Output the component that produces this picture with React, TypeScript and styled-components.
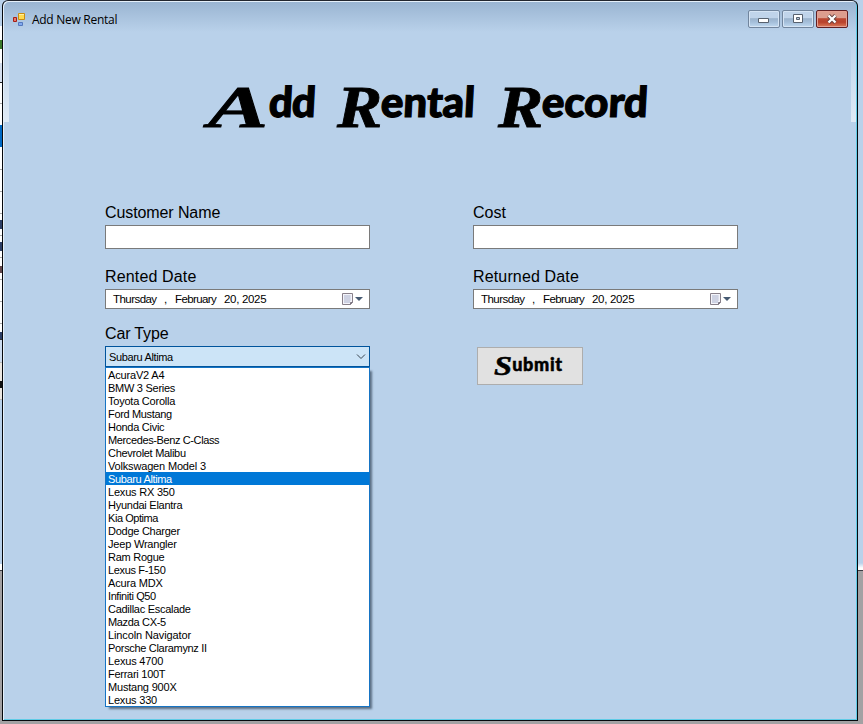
import React from "react";
import styled, { createGlobalStyle } from "styled-components";

const Global = createGlobalStyle`
  *{box-sizing:border-box}
  html,body{margin:0;padding:0;overflow:hidden}
  body{font-family:"Liberation Sans",Arial,sans-serif;color:#000}
`;

const Desktop = styled.div`
  width: 863px;
  height: 724px;
  display: grid;
  grid-template-columns: 2px 856px 5px;
  background: linear-gradient(#b9d1ea 0 563px, #fff 568px 570px, #3c3c44 570px 571px, #a3a1a3 571px);
`;

const LeftSliver = styled.div`
  height: 571px;
  background: linear-gradient(
    #b9d1ea 0 26px, #fff 26px 40px, #3c7a2c 40px 49px, #fff 49px 63px,
    #d5dfee 63px 82px, #222 82px 83px, #fff 83px 103px, #aaa 103px 104px,
    #fff 104px 125px, #0069c4 125px 147px, #fff 147px 169px, #aaa 169px 170px,
    #fff 170px 191px, #aaa 191px 192px, #fff 192px 213px, #aaa 213px 214px,
    #fff 214px 220px, #2d3f66 220px 229px, #fff 229px 235px, #aaa 235px 236px,
    #fff 236px 242px, #2d3f66 242px 251px, #fff 251px 257px, #aaa 257px 258px,
    #fff 258px 266px, #63484c 266px 273px, #fff 273px 279px, #aaa 279px 280px,
    #fff 280px 301px, #aaa 301px 302px, #fff 302px 323px, #aaa 323px 324px,
    #fff 324px 332px, #2d3f66 332px 339px, #333 339px 340px, #ccdcf0 340px 362px,
    #bbb 362px 363px, #ebe7e2 363px 381px, #111 381px 388px, #ebe7e2 388px 399px,
    #bbb 399px 400px, #b9d1ea 400px 564px, #fff 564px 570px, #3c3c44 570px
  );
`;

const Window = styled.main`
  width: 856px;
  height: 721px;
  border: 1px solid #05080c;
  border-top-color: #22262e;
  border-radius: 6px 6px 0 0;
  background:
    linear-gradient(rgba(255,255,255,0), rgba(255,255,255,.55)) 1px 32px / 5px 89px no-repeat,
    linear-gradient(rgba(255,255,255,0), rgba(255,255,255,.55)) 848px 32px / 5px 89px no-repeat,
    linear-gradient(#99b4d1, #b9d1ea 31px);
  box-shadow: inset 1px 1px 0 #e5f0fa, inset -1px -1px 0 #5fcbe6;
`;

const TitleBar = styled.header`
  height: 31px;
  display: flex;
  align-items: flex-start;
  padding: 9px 9px 0 10px;
`;

const AppIcon = styled.svg`
  width: 14px;
  height: 15px;
  margin-top: 2px;
`;

const Caption = styled.span`
  margin: 2px auto 0 5px;
  font: 12px/15px "Open Sans", sans-serif;
  letter-spacing: -0.28px;
`;

const Controls = styled.div`
  display: flex;
  gap: 2px;
`;

const ControlButton = styled.button<{ $danger?: boolean }>`
  width: 32px;
  height: 18px;
  padding: 0;
  display: grid;
  place-items: center;
  border: 1px solid ${p => (p.$danger ? "#611f22" : "#71859d")};
  border-radius: 2px;
  box-shadow: inset 0 0 0 1px ${p => (p.$danger ? "#e5a092" : "#d5e4f4")};
  background: ${p => p.$danger
    ? "linear-gradient(#dc9d8e 0 42%, #bb4933 48%, #b9422c 70%, #dc7c5a)"
    : "linear-gradient(#c0d4ea 0 42%, #9bb3cd 48%, #a5bfda 70%, #c0d9f0)"};
  svg { display: block; }
`;

const Heading = styled.h1`
  display: flex;
  align-items: flex-start;
  height: 60px;
  margin: 47px 0 0 203px;
  font: 900 42px/50px Lato, sans-serif;
`;

const Word = styled.span<{ $width: number }>`
  display: flex;
  width: ${p => p.$width}px;
`;

const Initial = styled.span<{ $width: number; $stretch: number }>`
  width: ${p => p.$width}px;
  font: italic 900 60px/50px "Liberation Serif", serif;
  -webkit-text-stroke: 0.8px #000;
  transform: translate(2px, 3px) scaleX(${p => p.$stretch});
  transform-origin: left;
`;

const Rest = styled.span<{ $track: number }>`
  letter-spacing: ${p => p.$track}px;
  -webkit-text-stroke: 1.2px #000;
  transform: translateY(-3px) skewX(-3deg);
`;

const Form = styled.form`
  display: grid;
  grid-template-columns: 265px 265px;
  column-gap: 103px;
  margin: 65px 0 0 102px;
`;

const Column = styled.div`
  display: flex;
  flex-direction: column;
`;

const Label = styled.label<{ $gap?: number; $track?: number }>`
  font-size: 16px;
  line-height: 18px;
  height: 18px;
  margin-top: ${p => p.$gap ?? 0}px;
  letter-spacing: ${p => p.$track ?? 0}px;
`;

const TextInput = styled.input`
  width: 265px;
  height: 24px;
  margin-top: 3px;
  border: 1px solid #7a7a7a;
  background: #fff;
  outline: 0;
`;

const DateBox = styled.div`
  display: flex;
  align-items: center;
  height: 20px;
  margin-top: 3px;
  padding: 0 5px 0 7px;
  border: 1px solid #7a7a7a;
  background: #fff;
  font-size: 11.5px;
  line-height: 18px;
  white-space: pre;
  svg { margin-left: auto; }
`;

const DatePart = styled.span<{ $width: number; $squeeze: number }>`
  width: ${p => p.$width}px;
  letter-spacing: ${p => p.$squeeze}px;
`;

const Combo = styled.div`
  position: relative;
  display: flex;
  align-items: center;
  justify-content: space-between;
  height: 21px;
  margin-top: 3px;
  padding: 0 3px;
  border: 1px solid #00549c;
  background: #cce4f7;
  font-size: 11px;
  letter-spacing: -0.36px;
`;

const Menu = styled.ul`
  position: absolute;
  top: 20px;
  left: -1px;
  width: 265px;
  height: 340px;
  margin: 0;
  padding: 0;
  list-style: none;
  border: 1px solid #1674c4;
  background: #fff;
  box-shadow: 3px 3px 2px -1px rgba(30, 45, 65, .6);
`;

const Option = styled.li<{ $selected: boolean; $track: number }>`
  height: 13px;
  padding-left: 2px;
  line-height: 14px;
  font-size: 11px;
  white-space: pre;
  letter-spacing: ${p => p.$track}px;
  color: ${p => (p.$selected ? "#fff" : "#000")};
  background: ${p => (p.$selected ? "#0078d7" : "transparent")};
`;

const Submit = styled.button`
  display: flex;
  align-items: center;
  justify-content: center;
  width: 106px;
  height: 38px;
  margin: 38px 0 0 4px;
  padding: 0 2px 4px 0;
  border: 1px solid #adadad;
  background: #e1e1e1;
  color: #000;
  font: 900 18px/24px Lato, sans-serif;
  letter-spacing: 0.7px;
  -webkit-text-stroke: 0.5px #000;
`;

const SubmitInitial = styled.span`
  width: 17px;
  font: italic 900 27px/24px "Liberation Serif", serif;
  transform: translateY(2px) scaleX(1.2);
`;

const cars: [string, number][] = [
  ["AcuraV2 A4", -0.17], ["BMW 3 Series", -0.27], ["Toyota Corolla", -0.23],
  ["Ford Mustang", -0.34], ["Honda Civic", -0.27], ["Mercedes-Benz C-Class", -0.38],
  ["Chevrolet Malibu", -0.3], ["Volkswagen Model 3", -0.17], ["Subaru Altima", -0.36],
  ["Lexus RX 350", -0.2], ["Hyundai Elantra", -0.26], ["Kia Optima", -0.45],
  ["Dodge Charger", -0.26], ["Jeep Wrangler", -0.2], ["Ram Rogue", -0.25],
  ["Lexus F-150", -0.34], ["Acura MDX", -0.17], ["Infiniti Q50", -0.4],
  ["Cadillac Escalade", -0.28], ["Mazda CX-5", -0.34], ["Lincoln Navigator", -0.12],
  ["Porsche Claramynz II", -0.32], ["Lexus 4700", -0.18], ["Ferrari 100T", -0.27],
  ["Mustang 900X", -0.2], ["Lexus 330", -0.2],
];

function DateField() {
  return (
    <DateBox>
      <DatePart $width={51} $squeeze={-0.55}>Thursday</DatePart>
      <DatePart $width={11} $squeeze={0}>,</DatePart>
      <DatePart $width={49} $squeeze={-0.6}>February</DatePart>
      <DatePart $width={50} $squeeze={-0.32}>20, 2025</DatePart>
      <svg width="22" height="13" viewBox="0 0 22 13">
        <path d="M.5 .5h10v9l-2 2h-8z" fill="#f4f4fa" stroke="#88808a" />
        <path d="M2 3h7M2 5h7M2 7h7M2 9h6M3 2v8M5 2v8M7 2v8" stroke="#b9bfd5" strokeWidth=".8" />
        <path d="M8.5 11.5v-2h2" fill="none" stroke="#77717d" />
        <path d="M13 4h8l-4 4z" fill="#465a72" />
      </svg>
    </DateBox>
  );
}

export default function App() {
  return (
    <>
      <Global />
      <Desktop>
        <LeftSliver />
        <Window>
          <TitleBar>
            <AppIcon viewBox="0 0 14 15">
              <path d="M.5 5.5h3v4h-3z" fill="#e97967" stroke="#a51e15" />
              <path d="M5.5 1.5h6v6h-6z" fill="#ffda4f" stroke="#c88c12" />
              <path d="M6 2.5h5" stroke="#fff1a0" />
              <path d="M5.5 10.5h4v3h-4z" fill="#82aaf0" stroke="#5579bd" />
            </AppIcon>
            <Caption>Add New Rental</Caption>
            <Controls>
              <ControlButton aria-label="Minimize">
                <svg width="12" height="10"><path d="M.5 4.5h10v4h-10z" fill="#fff" stroke="#57616e" /></svg>
              </ControlButton>
              <ControlButton aria-label="Maximize">
                <svg width="12" height="10"><path d="M1.5 .5h9v8h-9z" fill="#fff" stroke="#57616e" /><path d="M4.5 3.5h3v2h-3z" fill="#b8cade" stroke="#57616e" /></svg>
              </ControlButton>
              <ControlButton $danger aria-label="Close">
                <svg width="12" height="10"><path d="M2.5 1.5l7 7M9.5 1.5l-7 7" stroke="#65423f" strokeWidth="4" /><path d="M2.5 1.5l7 7M9.5 1.5l-7 7" stroke="#fff" strokeWidth="2.3" /></svg>
              </ControlButton>
            </Controls>
          </TitleBar>
          <Heading>
            <Word $width={129}><Initial $width={63} $stretch={1.5}>A</Initial><Rest $track={-1}>dd</Rest></Word>
            <Word $width={161}><Initial $width={46} $stretch={1.13}>R</Initial><Rest $track={0}>ental</Rest></Word>
            <Word $width={160}><Initial $width={46} $stretch={1.13}>R</Initial><Rest $track={0}>ecord</Rest></Word>
          </Heading>
          <Form>
            <Column>
              <Label $track={-0.1}>Customer Name</Label>
              <TextInput />
              <Label $gap={19} $track={0.15}>Rented Date</Label>
              <DateField />
              <Label $gap={16} $track={-0.15}>Car Type</Label>
              <Combo>
                Subaru Altima
                <svg width="10" height="7"><path d="M1 1.5l4 4 4-4" fill="none" stroke="#39444f" /></svg>
                <Menu>
                  {cars.map(([name, track]) => (
                    <Option key={name} $track={track} $selected={name === "Subaru Altima"}>{name}</Option>
                  ))}
                </Menu>
              </Combo>
            </Column>
            <Column>
              <Label>Cost</Label>
              <TextInput />
              <Label $gap={19} $track={0.15}>Returned Date</Label>
              <DateField />
              <Submit type="button"><SubmitInitial>S</SubmitInitial>ubmit</Submit>
            </Column>
          </Form>
        </Window>
      </Desktop>
    </>
  );
}
